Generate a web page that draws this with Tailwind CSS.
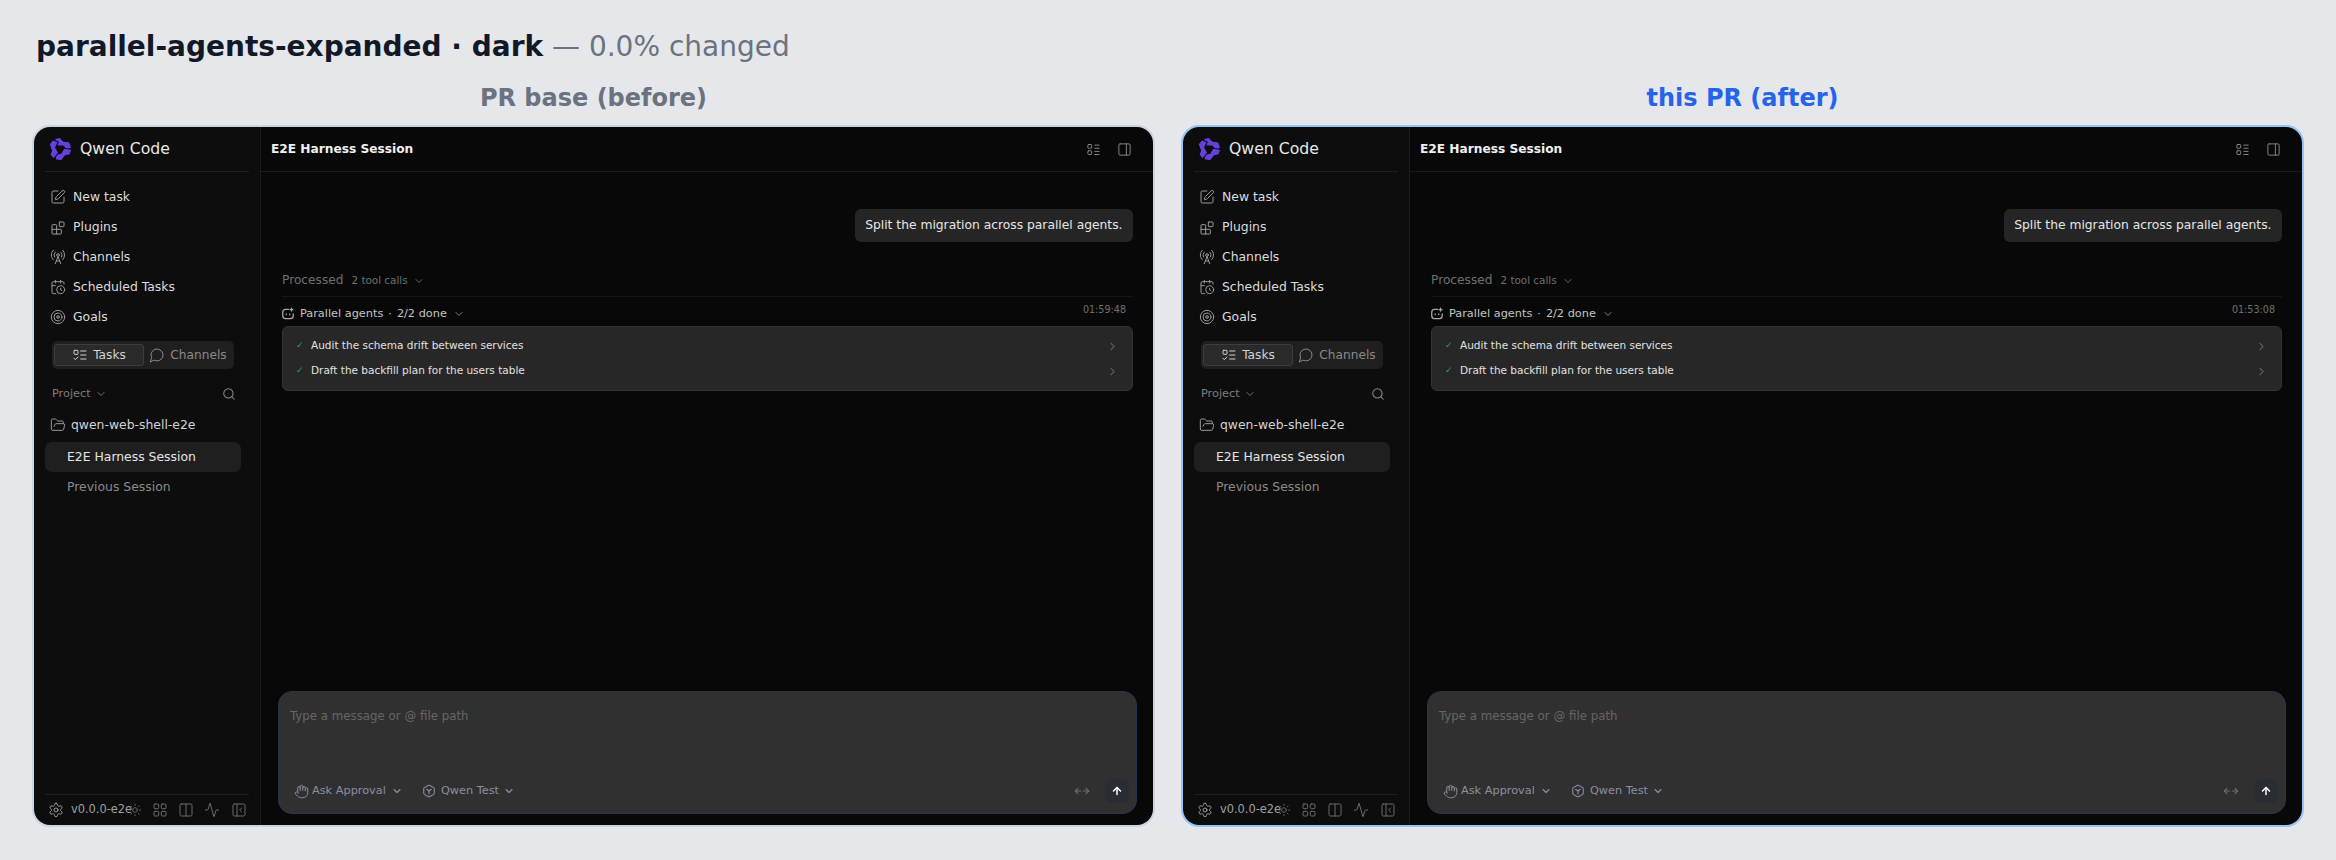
<!DOCTYPE html>
<html lang="en">
<head>
  <meta charset="UTF-8" />
  <title>parallel-agents-expanded</title>
  <script src="https://cdn.jsdelivr.net/npm/@tailwindcss/browser@4"></script>
</head>
<body class="bg-[#e5e7eb] h-[860px] overflow-hidden px-[32px] font-['DejaVu_Sans',sans-serif]">
  <!-- Page title -->
  <h1 class="pt-[30px] pl-[4px] h-[81px] text-[28px] leading-[34px] text-[#6b7280]"><b class="font-bold text-[#111827]">parallel-agents-expanded · dark</b> — 0.0% changed</h1>

  <div class="grid grid-cols-2 gap-[26px]">
    <div>
      <h2 class="h-[34px] flex items-center justify-center text-[24px] font-bold text-[#6b7280]">PR base (before)</h2>
      <div data-panel="01:59:48" class="mt-[10px] h-[702px] rounded-[18px] border-2 border-[#cbd5e1] overflow-hidden"></div>
    </div>
    <div>
      <h2 class="h-[34px] flex items-center justify-center text-[24px] font-bold text-[#2563eb]">this PR (after)</h2>
      <div data-panel="01:53:08" class="mt-[10px] h-[702px] rounded-[18px] border-2 border-[#93c5fd] overflow-hidden"></div>
    </div>
  </div>

  <!-- Shared panel markup, stamped into both columns -->
  <template id="panel">
    <div class="flex h-full text-[#e5e5e5]">
      <!-- Sidebar -->
      <aside class="w-[227px] shrink-0 bg-[#0d0d0d] border-r border-[#1c1c1c] flex flex-col px-[11px]">
        <div class="h-[45px] shrink-0 flex items-center gap-[8px] pl-[3px] border-b border-[#1f1f1f]">
          <svg class="w-[24px] h-[24px]" viewBox="0 0 24 24"><g fill="#6440dc" stroke="#0d0d0d" stroke-width="1"><path d="M6.5 1.5 12 .5l3 3.5 6.5 1 2 5.500-4.500 3.500-3.500-5H9.500z"/><path d="M6.5 1.5 12 .5l3 3.5 6.5 1 2 5.500-4.500 3.500-3.500-5H9.500z" transform="rotate(120 12 12)"/><path d="M6.5 1.5 12 .5l3 3.5 6.5 1 2 5.500-4.500 3.500-3.500-5H9.500z" transform="rotate(240 12 12)"/></g></svg>
          <span class="text-[15.7px] text-[#e8e8e8]">Qwen Code</span>
        </div>

        <nav class="mt-[10px] flex flex-col text-[12.4px] text-[#dcdcdc]">
          <a class="h-[30px] flex items-center gap-[7px] pl-[5px]"><svg class="w-[16px] h-[16px] text-[#9a9a9a]" viewBox="0 0 24 24" fill="none" stroke="currentColor" stroke-width="1.5" stroke-linecap="round" stroke-linejoin="round"><path d="M12 3H5a2 2 0 0 0-2 2v14a2 2 0 0 0 2 2h14a2 2 0 0 0 2-2v-7"/><path d="M18.375 2.625a1 1 0 0 1 3 3l-9.013 9.014a2 2 0 0 1-.853.505l-2.873.84a.5.5 0 0 1-.62-.62l.84-2.873a2 2 0 0 1 .506-.852z"/></svg>New task</a>
          <a class="h-[30px] flex items-center gap-[7px] pl-[5px] pt-[1px]"><svg class="w-[16px] h-[16px] text-[#9a9a9a]" viewBox="0 0 24 24" fill="none" stroke="currentColor" stroke-width="1.5" stroke-linecap="round" stroke-linejoin="round"><rect x="14" y="3" width="7" height="7" rx="1"/><path d="M10 21V8a1 1 0 0 0-1-1H4a1 1 0 0 0-1 1v12a1 1 0 0 0 1 1h12a1 1 0 0 0 1-1v-5a1 1 0 0 0-1-1H3"/></svg>Plugins</a>
          <a class="h-[30px] flex items-center gap-[7px] pl-[5px]"><svg class="w-[16px] h-[16px] text-[#9a9a9a]" viewBox="0 0 24 24" fill="none" stroke="currentColor" stroke-width="1.5" stroke-linecap="round" stroke-linejoin="round"><path d="M4.9 16.1C1 12.2 1 5.8 4.9 1.9"/><path d="M7.8 4.7a6.14 6.14 0 0 0-.8 7.5"/><circle cx="12" cy="9" r="2"/><path d="M16.2 4.8c2 2 2.26 5.11.8 7.47"/><path d="M19.1 1.9a9.96 9.96 0 0 1 0 14.1"/><path d="M9.5 18h5"/><path d="m8 22 4-11 4 11"/></svg>Channels</a>
          <a class="h-[30px] flex items-center gap-[7px] pl-[5px]"><svg class="w-[16px] h-[16px] text-[#9a9a9a]" viewBox="0 0 24 24" fill="none" stroke="currentColor" stroke-width="1.5" stroke-linecap="round" stroke-linejoin="round"><path d="M16 14v2.2l1.6 1"/><path d="M16 2v4"/><path d="M21 7.5V6a2 2 0 0 0-2-2H5a2 2 0 0 0-2 2v14a2 2 0 0 0 2 2h3.5"/><path d="M3 10h5"/><path d="M8 2v4"/><circle cx="16" cy="16" r="6"/></svg>Scheduled Tasks</a>
          <a class="h-[30px] flex items-center gap-[7px] pl-[5px]"><svg class="w-[16px] h-[16px] text-[#9a9a9a]" viewBox="0 0 24 24" fill="none" stroke="currentColor" stroke-width="1.5" stroke-linecap="round" stroke-linejoin="round"><circle cx="12" cy="12" r="10"/><circle cx="12" cy="12" r="6"/><circle cx="12" cy="12" r="2"/></svg>Goals</a>
        </nav>

        <!-- Tasks / Channels switch -->
        <div class="mt-[9px] ml-[7px] w-[182px] h-[28px] rounded-[5px] bg-[#1f1f1f] flex items-center px-[2px] text-[12.2px]">
          <div class="w-[90px] h-[22px] rounded-[3px] bg-[#2a2a2a] border border-[#3d3d3d] flex items-center justify-center gap-[5px] text-[#d4d4d4]"><svg class="w-[16px] h-[16px]" viewBox="0 0 24 24" fill="none" stroke="currentColor" stroke-width="1.5" stroke-linecap="round" stroke-linejoin="round"><rect x="3" y="5" width="6" height="6" rx="1"/><path d="m3 17 2 2 4-4"/><path d="M13 6h8"/><path d="M13 12h8"/><path d="M13 18h8"/></svg>Tasks</div>
          <div class="flex-1 flex items-center justify-center gap-[5px] text-[#8a8a8a]"><svg class="w-[16px] h-[16px]" viewBox="0 0 24 24" fill="none" stroke="currentColor" stroke-width="1.5" stroke-linecap="round" stroke-linejoin="round"><path d="M7.900 20A9 9 0 1 0 4 16.100L2 22Z"/></svg>Channels</div>
        </div>

        <div class="mt-[14px] h-[22px] flex items-center justify-between pl-[7px] pr-[13px] text-[11.3px] text-[#7d7d7d]">
          <span class="flex items-center gap-[4px]">Project <svg class="w-[12px] h-[12px]" viewBox="0 0 24 24" fill="none" stroke="currentColor" stroke-width="1.8" stroke-linecap="round" stroke-linejoin="round"><path d="m6 9 6 6 6-6"/></svg></span>
          <svg class="w-[14px] h-[14px] text-[#8a8a8a]" viewBox="0 0 24 24" fill="none" stroke="currentColor" stroke-width="1.8" stroke-linecap="round" stroke-linejoin="round"><circle cx="11" cy="11" r="8"/><path d="m21 21-4.3-4.3"/></svg>
        </div>

        <div class="mt-[8px] h-[24px] flex items-center gap-[5px] pl-[5px] text-[12.4px] text-[#d4d4d4]"><svg class="w-[16px] h-[16px] text-[#9a9a9a]" viewBox="0 0 24 24" fill="none" stroke="currentColor" stroke-width="1.5" stroke-linecap="round" stroke-linejoin="round"><path d="m6 14 1.5-2.9A2 2 0 0 1 9.24 10H20a2 2 0 0 1 1.94 2.5l-1.54 6a2 2 0 0 1-1.95 1.5H4a2 2 0 0 1-2-2V5a2 2 0 0 1 2-2h3.9a2 2 0 0 1 1.69.9l.81 1.2a2 2 0 0 0 1.67.9H18a2 2 0 0 1 2 2v2"/></svg>qwen-web-shell-e2e</div>
        <div class="mt-[5px] h-[30px] w-[196px] rounded-[7px] bg-[#1f1f1f] flex items-center pl-[22px] text-[12.4px] text-[#e5e5e5]">E2E Harness Session</div>
        <div class="h-[30px] flex items-center pl-[22px] text-[12.4px] text-[#8a8a8a]">Previous Session</div>

        <!-- Sidebar footer -->
        <div class="mt-auto h-[31px] shrink-0 border-t border-[#1f1f1f] flex items-center pl-[3px] text-[#a0a0a0]">
          <svg class="w-[16px] h-[16px]" viewBox="0 0 24 24" fill="none" stroke="currentColor" stroke-width="1.5" stroke-linecap="round" stroke-linejoin="round"><path d="M12.22 2h-.44a2 2 0 0 0-2 2v.18a2 2 0 0 1-1 1.73l-.43.25a2 2 0 0 1-2 0l-.15-.08a2 2 0 0 0-2.73.73l-.22.38a2 2 0 0 0 .73 2.73l.15.1a2 2 0 0 1 1 1.72v.51a2 2 0 0 1-1 1.74l-.15.09a2 2 0 0 0-.73 2.73l.22.38a2 2 0 0 0 2.73.73l.15-.08a2 2 0 0 1 2 0l.43.25a2 2 0 0 1 1 1.73V20a2 2 0 0 0 2 2h.44a2 2 0 0 0 2-2v-.18a2 2 0 0 1 1-1.73l.43-.25a2 2 0 0 1 2 0l.15.08a2 2 0 0 0 2.73-.73l.22-.39a2 2 0 0 0-.73-2.73l-.15-.08a2 2 0 0 1-1-1.74v-.5a2 2 0 0 1 1-1.74l.15-.09a2 2 0 0 0 .73-2.73l-.22-.38a2 2 0 0 0-2.73-.73l-.15.08a2 2 0 0 1-2 0l-.43-.25a2 2 0 0 1-1-1.73V4a2 2 0 0 0-2-2z"/><circle cx="12" cy="12" r="3"/></svg>
          <span class="ml-[7px] w-[57px] text-[11.4px] whitespace-nowrap">v0.0.0-e2e</span>
          <svg class="w-[14px] h-[14px] text-[#6b6b6b]" viewBox="0 0 24 24" fill="none" stroke="currentColor" stroke-width="1.5" stroke-linecap="round" stroke-linejoin="round"><circle cx="12" cy="12" r="4"/><path d="M12 2v2M12 20v2M2 12h2M20 12h2M5 5l1.4 1.4M17.6 17.6 19 19M5 19l1.4-1.4M17.6 6.4 19 5"/></svg>
          <svg class="ml-[10px] w-[16px] h-[16px] text-[#6b6b6b]" viewBox="0 0 24 24" fill="none" stroke="currentColor" stroke-width="1.5" stroke-linecap="round" stroke-linejoin="round"><rect x="3" y="3" width="7" height="7" rx="1.5"/><rect x="14" y="3" width="7" height="7" rx="1.5"/><rect x="14" y="14" width="7" height="7" rx="1.5"/><rect x="3" y="14" width="7" height="7" rx="1.5"/></svg>
          <svg class="ml-[10px] w-[16px] h-[16px] text-[#6b6b6b]" viewBox="0 0 24 24" fill="none" stroke="currentColor" stroke-width="1.5" stroke-linecap="round" stroke-linejoin="round"><rect x="3" y="3" width="18" height="18" rx="2"/><path d="M12 3v18"/></svg>
          <svg class="ml-[10px] w-[16px] h-[16px] text-[#6b6b6b]" viewBox="0 0 24 24" fill="none" stroke="currentColor" stroke-width="1.5" stroke-linecap="round" stroke-linejoin="round"><path d="M22 12h-2.48a2 2 0 0 0-1.93 1.46l-2.35 8.36a.25.25 0 0 1-.48 0L9.24 2.18a.25.25 0 0 0-.48 0l-2.35 8.36A2 2 0 0 1 4.49 12H2"/></svg>
          <svg class="ml-[11px] w-[16px] h-[16px] text-[#6b6b6b]" viewBox="0 0 24 24" fill="none" stroke="currentColor" stroke-width="1.5" stroke-linecap="round" stroke-linejoin="round"><rect x="3" y="3" width="18" height="18" rx="2"/><path d="M9 3v18"/><path d="m16 15-3-3 3-3"/></svg>
        </div>
      </aside>

      <!-- Main column -->
      <main class="flex-1 min-w-0 bg-[#080808] flex flex-col">
        <header class="h-[45px] shrink-0 border-b border-[#1a1a1a] flex items-center justify-between pl-[10px] pr-[21px]">
          <span class="text-[12.2px] font-bold text-[#f0f0f0]">E2E Harness Session</span>
          <div class="flex items-center gap-[16px] text-[#8a8a8a]">
            <svg class="w-[15px] h-[15px]" viewBox="0 0 24 24" fill="none" stroke="currentColor" stroke-width="1.5" stroke-linecap="round" stroke-linejoin="round"><rect x="3" y="4" width="6" height="6" rx="1"/><rect x="3" y="14" width="6" height="6" rx="1"/><path d="M14 5h7"/><path d="M14 10h7"/><path d="M14 15h7"/><path d="M14 20h7"/></svg>
            <svg class="w-[15px] h-[15px]" viewBox="0 0 24 24" fill="none" stroke="currentColor" stroke-width="1.5" stroke-linecap="round" stroke-linejoin="round"><rect x="3" y="3" width="18" height="18" rx="2"/><path d="M15 3v18"/></svg>
          </div>
        </header>

        <div class="flex-1 flex flex-col pl-[21px] pr-[20px]">
          <div class="mt-[37px] self-end h-[33px] px-[10.5px] rounded-[6px] bg-[#252525] flex items-center text-[12.3px] text-[#e5e5e5]">Split the migration across parallel agents.</div>

          <div class="mt-[26px] h-[29px] pb-[3px] border-b border-[#161616] flex items-center text-[10.4px] text-[#6f6f6f]">
            <span class="text-[12.2px]">Processed</span><span class="ml-[8px]">2 tool calls</span><svg class="ml-[5px] w-[12px] h-[12px]" viewBox="0 0 24 24" fill="none" stroke="currentColor" stroke-width="1.8" stroke-linecap="round" stroke-linejoin="round"><path d="m6 9 6 6 6-6"/></svg>
          </div>

          <div class="mt-[5px] h-[24px] flex items-center text-[11.3px] text-[#c4c4c4]">
            <svg class="-ml-[1px] w-[14px] h-[14px] text-[#a8a8a8]" viewBox="0 0 24 24" fill="none" stroke="currentColor" stroke-width="2.2" stroke-linecap="round" stroke-linejoin="round"><path d="M13 4H8a5 5 0 0 0-5 5v6a5 5 0 0 0 5 5h8a5 5 0 0 0 5-5v-3"/><path d="M18 2v5M15.5 4.5h5"/><path d="M9 12v1M15 12v1"/></svg>
            <span class="ml-[5px]">Parallel agents</span><span class="mx-[5px]">·</span><span>2/2 done</span>
            <svg class="ml-[6px] w-[12px] h-[12px] text-[#8a8a8a]" viewBox="0 0 24 24" fill="none" stroke="currentColor" stroke-width="1.8" stroke-linecap="round" stroke-linejoin="round"><path d="m6 9 6 6 6-6"/></svg>
            <span data-time class="ml-auto mr-[7px] -mt-[8px] text-[9.6px] text-[#6f6f6f]"></span>
          </div>

          <div class="h-[65px] rounded-[6px] bg-[#272727] border border-[#333333] flex flex-col justify-center text-[10.5px] text-[#e2e2e2]">
            <div class="h-[25px] flex items-center pl-[13px] pr-[13px]"><span class="w-[15px] text-[#2f9e5a] text-[9px]">✓</span><span>Audit the schema drift between services</span><svg class="ml-auto w-[13px] h-[13px] text-[#5a5a5a]" viewBox="0 0 24 24" fill="none" stroke="currentColor" stroke-width="2" stroke-linecap="round" stroke-linejoin="round"><path d="m9 18 6-6-6-6"/></svg></div>
            <div class="h-[25px] flex items-center pl-[13px] pr-[13px]"><span class="w-[15px] text-[#2f9e5a] text-[9px]">✓</span><span>Draft the backfill plan for the users table</span><svg class="ml-auto w-[13px] h-[13px] text-[#5a5a5a]" viewBox="0 0 24 24" fill="none" stroke="currentColor" stroke-width="2" stroke-linecap="round" stroke-linejoin="round"><path d="m9 18 6-6-6-6"/></svg></div>
          </div>

          <!-- Composer -->
          <div class="mt-auto mb-[11px] h-[123px] -mx-[4px] rounded-[14px] bg-[#303030] border border-[#2c3350] flex flex-col">
            <div class="pl-[11px] pt-[16px] text-[11.8px] leading-[16px] text-[#666666]">Type a message or @ file path</div>
            <div class="mt-auto mb-[10px] h-[24px] flex items-center pl-[15px] pr-[7px] text-[11.3px] text-[#8b8fa0]">
              <svg class="w-[15px] h-[15px]" viewBox="0 0 24 24" fill="none" stroke="currentColor" stroke-width="1.6" stroke-linecap="round" stroke-linejoin="round"><path d="M18 11V6a2 2 0 0 0-2-2a2 2 0 0 0-2 2"/><path d="M14 10V4a2 2 0 0 0-2-2a2 2 0 0 0-2 2v2"/><path d="M10 10.5V6a2 2 0 0 0-2-2a2 2 0 0 0-2 2v8"/><path d="M18 8a2 2 0 1 1 4 0v6a8 8 0 0 1-8 8h-2c-2.8 0-4.5-.86-5.99-2.34l-3.6-3.6a2 2 0 0 1 2.83-2.82L7 15"/></svg>
              <span class="ml-[3px]">Ask Approval</span>
              <svg class="ml-[5px] w-[12px] h-[12px]" viewBox="0 0 24 24" fill="none" stroke="currentColor" stroke-width="2.2" stroke-linecap="round" stroke-linejoin="round"><path d="m6 9 6 6 6-6"/></svg>
              <svg class="ml-[19px] w-[14px] h-[14px]" viewBox="0 0 24 24" fill="none" stroke="currentColor" stroke-width="1.8" stroke-linecap="round" stroke-linejoin="round"><path d="M21 8a2 2 0 0 0-1-1.73l-7-4a2 2 0 0 0-2 0l-7 4A2 2 0 0 0 3 8v8a2 2 0 0 0 1 1.73l7 4a2 2 0 0 0 2 0l7-4A2 2 0 0 0 21 16Z"/><path d="m8 9 4 3 4-3"/><path d="M12 12v5"/></svg>
              <span class="ml-[5px]">Qwen Test</span>
              <svg class="ml-[4px] w-[12px] h-[12px]" viewBox="0 0 24 24" fill="none" stroke="currentColor" stroke-width="2.2" stroke-linecap="round" stroke-linejoin="round"><path d="m6 9 6 6 6-6"/></svg>
              <svg class="ml-auto w-[16px] h-[16px] text-[#6f6f78]" viewBox="0 0 24 24" fill="none" stroke="currentColor" stroke-width="1.6" stroke-linecap="round" stroke-linejoin="round"><path d="M2 12h8"/><path d="M14 12h8"/><path d="m6 8-4 4 4 4"/><path d="m18 8 4 4-4 4"/></svg>
              <div class="ml-[15px] w-[24px] h-[24px] rounded-[6px] bg-[#2a2c34] flex items-center justify-center text-white"><svg class="w-[12px] h-[12px]" viewBox="0 0 24 24" fill="none" stroke="currentColor" stroke-width="3" stroke-linecap="round" stroke-linejoin="round"><path d="m5 12 7-7 7 7"/><path d="M12 19V5"/></svg></div>
            </div>
          </div>
        </div>
      </main>
    </div>
  </template>

  <script>
    // Both columns show the same app, only the clock differs
    const tpl = document.getElementById('panel');
    document.querySelectorAll('[data-panel]').forEach(slot => {
      const node = tpl.content.cloneNode(true);
      node.querySelector('[data-time]').textContent = slot.dataset.panel;
      slot.appendChild(node);
    });
  </script>
</body>
</html>
